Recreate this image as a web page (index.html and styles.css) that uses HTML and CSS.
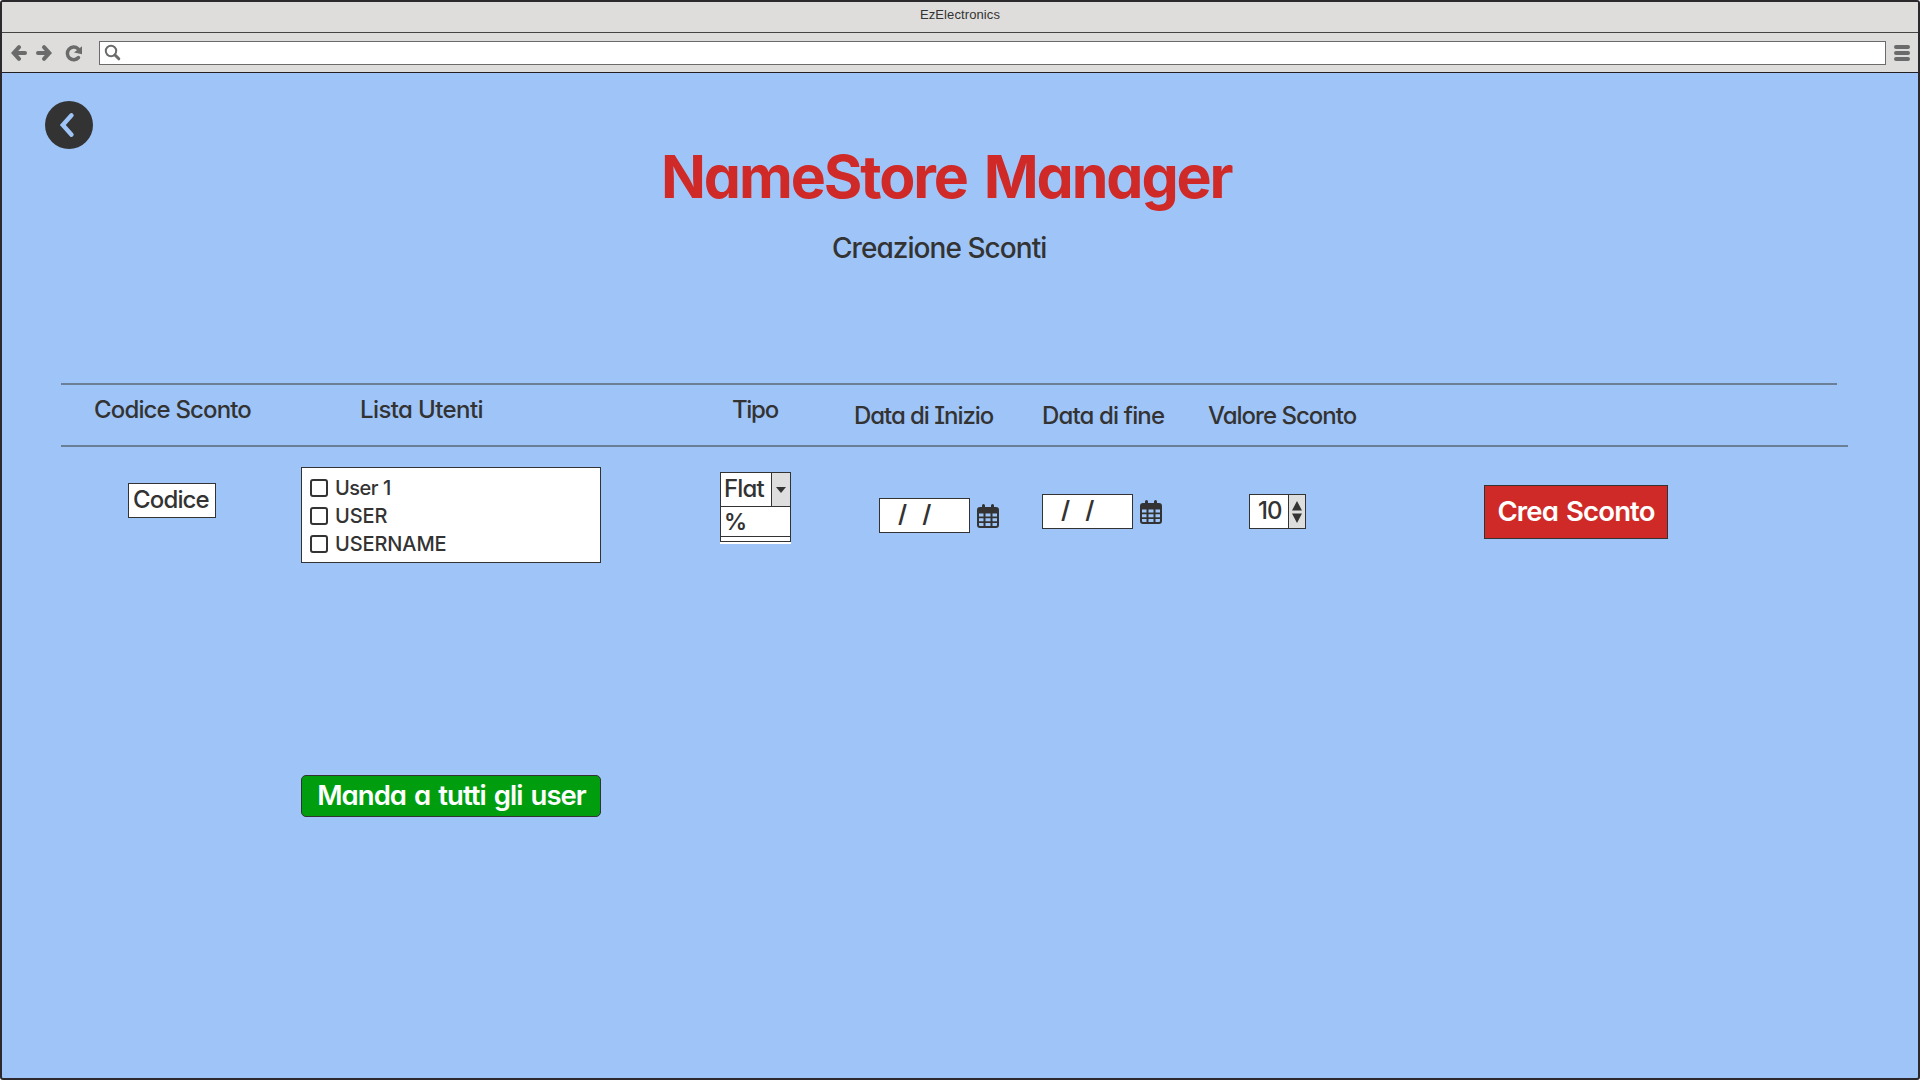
FILE: index.html
```html
<!DOCTYPE html>
<html lang="it">
<head>
<meta charset="utf-8">
<title>EzElectronics</title>
<link rel="stylesheet" href="styles.css">
</head>
<body>
<div class="window">
  <div class="titlebar">EzElectronics</div>
  <div class="toolbar">
    <svg class="nav-icons" width="74" height="18" viewBox="0 0 74 18" fill="none" stroke="#6b6b6b" stroke-width="4" stroke-linecap="round">
      <path d="M14 9H4"/><path d="M8 3.200L2.700 9l5.300 5.800"/>
      <path d="M27 9h10"/><path d="M33 3.200L38.300 9 33 14.800"/>
      <path d="M67.500 13.500A6.300 6.300 0 1 1 67 4.800" stroke-width="3.500"/><path d="M71 2.300v8L63 8.500z" fill="#6b6b6b" stroke="none"/>
    </svg>
    <div class="address">
      <svg width="18" height="18" viewBox="0 0 18 18" fill="none" stroke="#6b6b6b"><circle cx="7" cy="7" r="5.200" stroke-width="2"/><path d="M11 11l3.800 3.800" stroke-width="3" stroke-linecap="round"/></svg>
    </div>
    <div class="menu"><i></i><i></i><i></i></div>
  </div>
  <main>
    <button class="back" aria-label="Indietro"><svg width="48" height="48" viewBox="0 0 48 48"><circle cx="24" cy="24" r="24" fill="#333"/><path d="M26.500 14.300L17.800 24l8.700 9.700" fill="none" stroke="#9fc5f8" stroke-width="4.400" stroke-linecap="round"/></svg></button>
    <h1>NameStore Manager</h1>
    <h2>Creazione Sconti</h2>
    <section class="table">
      <div class="row head">
        <span class="c1">Codice Sconto</span><span class="c2">Lista Utenti</span><span class="c3">Tipo</span><span class="c4 low">Data di Inizio</span><span class="c5 low">Data di fine</span><span class="c6 low">Valore Sconto</span>
      </div>
      <div class="row body">
        <div class="code">Codice</div>
        <div class="users">
          <label><i></i><span class="u1">User 1</span></label>
          <label><i></i><span>USER</span></label>
          <label><i></i><span>USERNAME</span></label>
        </div>
        <div class="combo">
          <div class="selected"><span>Flat</span><b><svg width="10" height="6" viewBox="0 0 10 6"><path d="M0 0h10L5 6z" fill="#333"/></svg></b></div>
          <div class="option">%</div>
          <div class="tail"></div>
        </div>
        <div class="date start"><div class="field"><span>/</span><span>/</span></div><svg width="22" height="24" viewBox="0 0 22 24"><path d="M3 3h2V1.500a1.500 1.500 0 0 1 3 0V3h6V1.500a1.500 1.500 0 0 1 3 0V3h2a3 3 0 0 1 3 3v15a3 3 0 0 1-3 3H3a3 3 0 0 1-3-3V6a3 3 0 0 1 3-3z" fill="#333"/><path d="M2 9.500h4.500v3H2zm6.500 0h5v3h-5zm7 0H20v3h-4.500zM2 14.300h4.500v3H2zm6.500 0h5v3h-5zm7 0H20v3h-4.500zM2 19h4.500v3H3a1 1 0 0 1-1-1zm6.500 0h5v3h-5zm7 0H20v2a1 1 0 0 1-1 1h-3.500z" fill="#9fc5f8"/></svg></div>
        <div class="date end"><div class="field"><span>/</span><span>/</span></div><svg width="22" height="24" viewBox="0 0 22 24"><path d="M3 3h2V1.500a1.500 1.500 0 0 1 3 0V3h6V1.500a1.500 1.500 0 0 1 3 0V3h2a3 3 0 0 1 3 3v15a3 3 0 0 1-3 3H3a3 3 0 0 1-3-3V6a3 3 0 0 1 3-3z" fill="#333"/><path d="M2 9.500h4.500v3H2zm6.500 0h5v3h-5zm7 0H20v3h-4.500zM2 14.300h4.500v3H2zm6.500 0h5v3h-5zm7 0H20v3h-4.500zM2 19h4.500v3H3a1 1 0 0 1-1-1zm6.500 0h5v3h-5zm7 0H20v2a1 1 0 0 1-1 1h-3.500z" fill="#9fc5f8"/></svg></div>
        <div class="stepper"><span>10</span><b><svg width="10" height="22" viewBox="0 0 10 22"><path d="M0 9.500h10L5 0zM0 12.500h10L5 22z" fill="#333"/></svg></b></div>
        <button class="create">Crea Sconto</button>
      </div>
    </section>
    <button class="send">Manda a tutti gli user</button>
  </main>
</div>
</body>
</html>
```

FILE: styles.css
```css
* { box-sizing: border-box; }
body { margin: 0; color: #333; font: 500 24px/30px Inter, "Noto Sans", sans-serif; font-feature-settings: "cv11", "cv08"; letter-spacing: -0.85px; white-space: nowrap; }
button { display: block; padding: 0; border: 0; background: none; color: inherit; font: inherit; font-feature-settings: inherit; letter-spacing: inherit; }
svg { display: block; flex: none; }
.window { width: 1920px; height: 1080px; border: 2px solid #2b292b; border-radius: 3px; background: #9fc5f8; overflow: hidden; }
.titlebar { height: 31px; padding-top: 5px; border-bottom: 1px solid #444; background: #dedddb; text-align: center; font: 13px/16px "Liberation Sans", Arial, sans-serif; letter-spacing: 0.1px; }
.toolbar { display: flex; align-items: center; height: 40px; padding: 0 8px 0 9px; background: #dedddb; border-bottom: 1px solid #231f20; }
.nav-icons { margin-top: 1px; }
.address { display: flex; align-items: center; flex: 1; height: 24px; margin: 0 8px 0 14px; padding-left: 4px; border: 1px solid #6b6b6b; background: #fff; }
.menu { display: flex; flex-direction: column; gap: 2px; width: 16px; margin-top: 1px; }
.menu i { height: 4px; border-radius: 2px; background: #6b6b6b; }
main { display: flow-root; padding-top: 28px; }
.back { width: 48px; height: 48px; margin-left: 43px; }
h1 { margin: 1px 0 0 659px; font-size: 59px; line-height: 54px; font-weight: 700; letter-spacing: -2.1px; word-spacing: 5px; color: #cf2a27; }
h2 { margin: 27px 0 0 830px; font-size: 28px; line-height: 34px; font-weight: 500; letter-spacing: -0.95px; }
.table { width: 1787px; margin: 118px 0 0 59px; }
.table::before { content: ""; display: block; width: 1776px; height: 2px; background: #6b7f97; }
.row { display: grid; grid-template-columns: 240px 419px 159px 163px 207px 235px 1fr; align-items: start; }
.head { height: 62px; padding-top: 10px; border-bottom: 2px solid #6b7f97; }
.low { margin-top: 6px; }
.c1 { margin-left: 33px; }
.c2 { margin-left: 59px; letter-spacing: -0.6px; }
.c3 { margin-left: 12px; letter-spacing: -1.3px; }
.c4 { margin-left: -25px; letter-spacing: -1.05px; }
.c6 { margin-left: -41px; letter-spacing: -1px; }
.body { height: 328px; }
.code { width: 88px; height: 35px; margin: 36px 0 0 67px; padding: 1px 0 0 4px; border: 1px solid #333; background: #fff; }
.users { display: flex; flex-direction: column; width: 300px; height: 96px; padding: 6px 8px; border: 1px solid #333; background: #fff; margin-top: 20px; font-size: 20px; line-height: 28px; letter-spacing: -0.1px; }
.users label { display: flex; align-items: center; gap: 7px; height: 28px; }
.users i { width: 18px; height: 18px; border: 2px solid #333; border-radius: 3px; }
.u1 { letter-spacing: -0.5px; }
.combo { width: 71px; height: 72px; margin-top: 25px; border-bottom: 2px solid #fff; }
.selected { display: flex; height: 35px; padding: 1px 0 0 3px; border: 1px solid #333; background: #fff; }
.selected b, .stepper b { display: flex; align-items: center; justify-content: center; width: 19px; margin: -1px 0 0 auto; border-left: 1px solid #333; background: #dedede; }
.option { height: 30px; padding-left: 3px; border: 1px solid #333; border-top: 0; background: #fff; font-size: 23px; font-weight: 600; }
.tail { height: 5px; border: 1px solid #333; border-top: 0; background: #fff; }
.date { display: flex; gap: 7px; align-items: center; }
.start { margin-top: 51px; }
.end { margin-top: 47px; }
.field { display: flex; gap: 16px; width: 91px; height: 35px; padding: 0 0 0 18px; border: 1px solid #333; background: #fff; font-weight: 600; }
.stepper { display: flex; width: 57px; height: 35px; margin-top: 47px; padding: 1px 0 0 8px; border: 1px solid #333; background: #fff; }
.stepper b { width: 17px; }
.create { width: 184px; height: 54px; margin-top: 38px; padding-bottom: 2px; border: 1px solid #333; background: #cf2a27; color: #fff; font-size: 27.5px; font-weight: 600; letter-spacing: -0.85px; word-spacing: 2px; }
.send { width: 300px; height: 42px; margin-left: 299px; padding: 0 0 2px 1px; border: 1px solid #333; border-radius: 5px; background: #009e0f; color: #fff; font-size: 27.5px; font-weight: 600; letter-spacing: -0.95px; word-spacing: 2px; }
```
